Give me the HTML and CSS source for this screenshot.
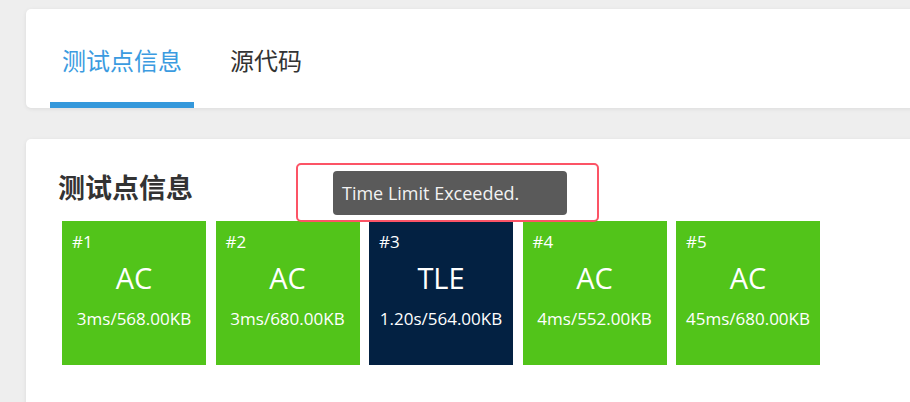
FILE: index.html
```html
<!DOCTYPE html>
<html lang="zh">
<head>
<meta charset="utf-8">
<link rel="stylesheet" href="styles.css">
</head>
<body>
<div class="page">
  <div class="card tabs-card">
    <div class="tab active">测试点信息</div>
    <div class="tab">源代码</div>
  </div>
  <div class="card main-card">
    <h2 class="title">测试点信息</h2>
    <div class="tiles">
      <div class="tile ac"><div class="num">#1</div><div class="status">AC</div><div class="info">3ms/568.00KB</div></div>
      <div class="tile ac"><div class="num">#2</div><div class="status">AC</div><div class="info">3ms/680.00KB</div></div>
      <div class="tile tle"><div class="num">#3</div><div class="status">TLE</div><div class="info">1.20s/564.00KB</div></div>
      <div class="tile ac"><div class="num">#4</div><div class="status">AC</div><div class="info">4ms/552.00KB</div></div>
      <div class="tile ac"><div class="num">#5</div><div class="status">AC</div><div class="info">45ms/680.00KB</div></div>
    </div>
    <div class="highlight"></div>
    <div class="tooltip">Time Limit Exceeded.</div>
  </div>
</div>
</body>
</html>
```
FILE: styles.css
```css
html, body {
  margin: 0;
  padding: 0;
  background: #eeeeee;
  overflow: hidden;
  width: 910px;
  height: 402px;
  font-family: "Open Sans", "Noto Sans CJK SC", sans-serif;
}
.page {
  width: 1000px;
  padding: 9px 0 0 26px;
  display: flex;
  flex-direction: column;
  gap: 31px;
}
.card {
  background: #fff;
  border-radius: 5px;
  box-shadow: 0 1px 4px rgba(0, 0, 0, 0.08);
}
.tabs-card {
  height: 99px;
  display: flex;
  padding-left: 24px;
  gap: 24px;
  overflow: hidden;
}
.tab {
  height: 99px;
  box-sizing: border-box;
  padding: 2px 12px 0;
  display: flex;
  align-items: center;
  font-size: 24px;
  color: #333;
  font-family: "Noto Sans CJK SC", sans-serif;
}
.tab.active {
  color: #3b9be0;
  border-bottom: 6px solid #3498db;
  padding-top: 8px;
}
.main-card {
  position: relative;
  height: 300px;
  padding: 31px 0 0 32px;
}
.title {
  margin: 0;
  font-size: 27px;
  line-height: 34px;
  font-weight: 700;
  color: #333;
  font-family: "Noto Sans CJK SC", sans-serif;
}
.tiles {
  display: flex;
  gap: 9.5px;
  margin: 17px 0 0 4px;
}
.tile {
  width: 144px;
  height: 144px;
  color: #fff;
  display: flex;
  flex-direction: column;
  box-sizing: border-box;
  padding: 10px 10px 0;
}
.tile.ac { background: #52c41a; }
.tile.tle { background: #032142; }
.num {
  font-size: 17px;
  line-height: 22px;
}
.status {
  text-align: center;
  font-size: 29px;
  line-height: 40px;
  margin-top: 5px;
}
.info {
  text-align: center;
  font-size: 17px;
  line-height: 22px;
  margin-top: 10px;
  white-space: nowrap;
  margin-left: -10px;
  margin-right: -10px;
}
.highlight {
  position: absolute;
  left: 270px;
  top: 24px;
  width: 299px;
  height: 55px;
  border: 2px solid #fc5466;
  border-radius: 5px;
}
.tooltip {
  position: absolute;
  left: 307px;
  top: 32px;
  width: 234px;
  height: 44px;
  box-sizing: border-box;
  padding-left: 9px;
  background: #5a5a5a;
  border-radius: 4px;
  color: #f2f2f2;
  font-size: 18px;
  line-height: 44px;
}
```
